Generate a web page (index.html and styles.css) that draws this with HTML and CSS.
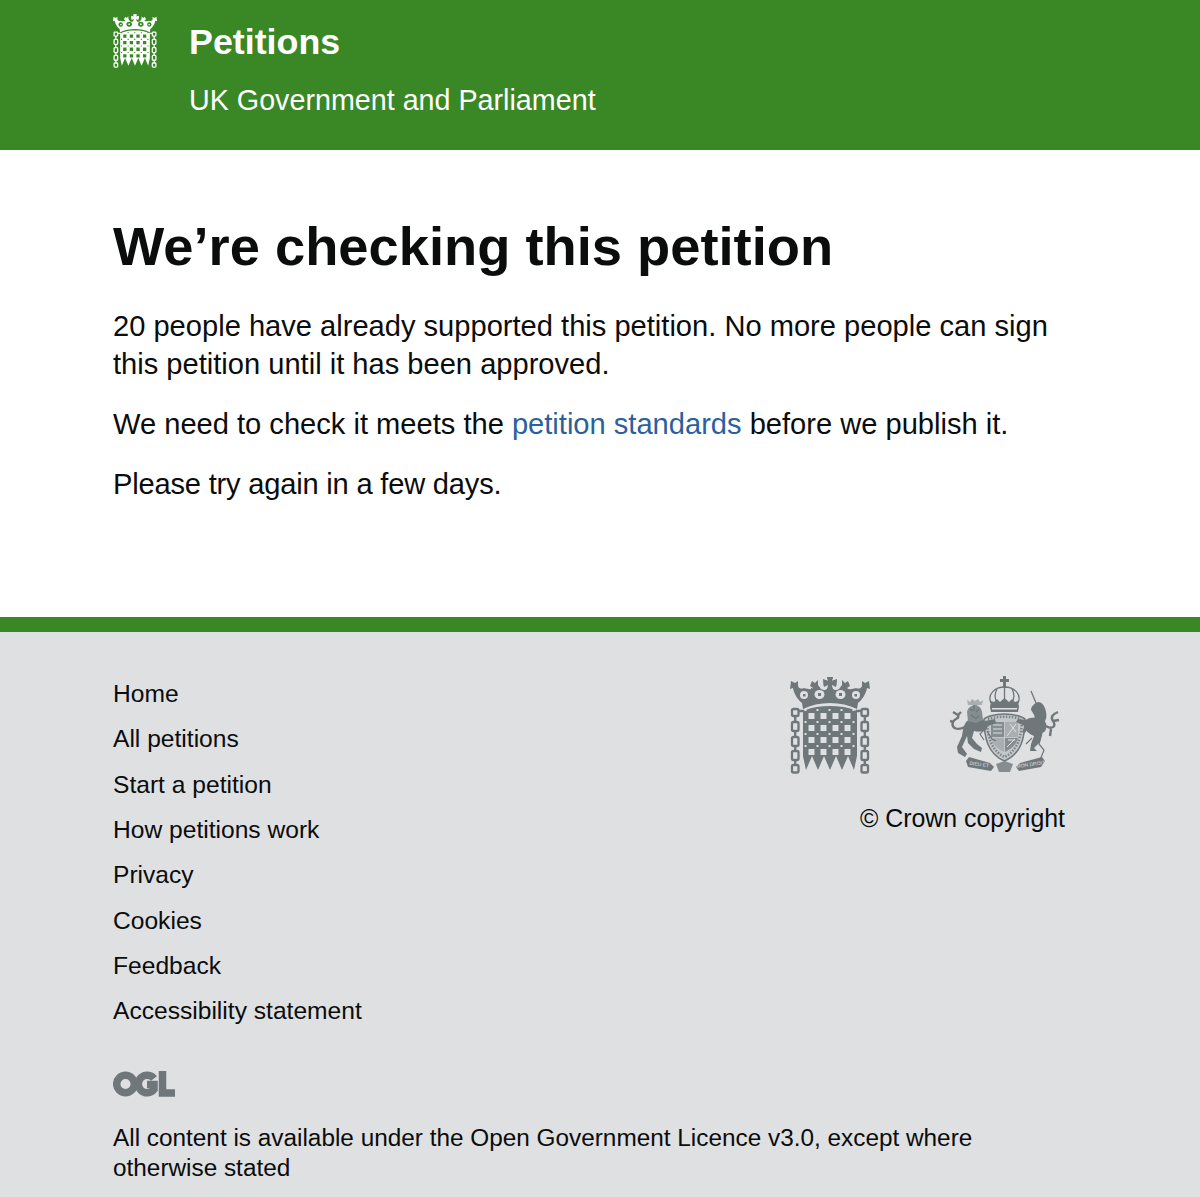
FILE: index.html
```html
<!DOCTYPE html>
<html lang="en">
<head>
<meta charset="utf-8">
<title>We’re checking this petition</title>
<link rel="stylesheet" href="styles.css">
</head>
<body>
<svg class="defs" width="0" height="0" aria-hidden="true">
  <symbol id="portcullis" viewBox="0 0 80 98">
    <path id="crown-half" d="M40 27C30 27 21 29 13 33L12 27C8 24 4 18 3 12L0 13 1 5 5 7 8 5 8 10C9 13 12 13 14 12 18 13 21 14 23 12L20 10 22 5 25 7 28 4 28 9 31 13C34 15 36 14 38 12L38 9 34 11 33 3 38 5 37 1H43L40 5z"/>
    <use href="#crown-half" transform="translate(80) scale(-1 1)"/>
    <path d="M38 5h4v10h-4z"/>
    <path d="M37 1h6l-1.500 4 5-1.500v6l-5-1.500 1.500 5h-6l1.500-5-5 1.500v-6l5 1.500z"/>
    <g class="crown-holes">
      <ellipse cx="29.500" cy="18.500" rx="5" ry="4.500"/>
      <ellipse cx="50.500" cy="18.500" rx="5" ry="4.500"/>
      <ellipse cx="14" cy="19" rx="4" ry="4"/>
      <ellipse cx="66" cy="19" rx="4" ry="4"/>
    </g>
    <path d="M28 17h3v3h-3zM49 17h3v3h-3zM13 18h2.500v2.500H13zM64.500 18H67v2.500h-2.500z"/>
    <path d="M13 35C22 31 31 30 40 30s18 1 27 5V80L64 94 58 80 52 94 46 80 40 94 34 80 28 94 22 80 16 94 13 80z"/>
    <g class="holes">
      <path class="hole-squares" d="M18.500 40h42M18.500 52h42M18.500 64h42M18.500 76h42"/>
      <path class="hole-dots" d="M14.500 34h50M14.500 46h50M14.500 58h50M14.500 70h50"/>
    </g>
    <g class="chain">
      <rect x="2" y="33" width="6.500" height="7" rx="1.500"/>
      <rect x="2" y="46" width="6.500" height="9" rx="1.500"/>
      <rect x="2" y="61" width="6.500" height="9" rx="1.500"/>
      <rect x="2" y="75" width="6.500" height="9" rx="1.500"/>
      <rect x="2" y="89" width="6.500" height="7.500" rx="1.500"/>
      <rect x="71.500" y="33" width="6.500" height="7" rx="1.500"/>
      <rect x="71.500" y="46" width="6.500" height="9" rx="1.500"/>
      <rect x="71.500" y="61" width="6.500" height="9" rx="1.500"/>
      <rect x="71.500" y="75" width="6.500" height="9" rx="1.500"/>
      <rect x="71.500" y="89" width="6.500" height="7.500" rx="1.500"/>
      <path d="M5.200 40v6M5.200 55v6M5.200 70v5M5.200 84v5M74.800 40v6M74.800 55v6M74.800 70v5M74.800 84v5M8 35h6M72 35h-6"/>
    </g>
  </symbol>
</svg>

<header class="site-header">
  <div class="wrap header-inner">
    <svg class="logo-header"><use href="#portcullis"/></svg>
    <div class="header-text">
      <div class="site-name">Petitions</div>
      <div class="site-sub">UK Government and Parliament</div>
    </div>
  </div>
</header>

<main class="wrap content">
  <h1>We’re checking this petition</h1>
  <p>20 people have already supported this petition. No more people can sign this petition until it has been approved.</p>
  <p>We need to check it meets the <a href="#">petition standards</a> before we publish it.</p>
  <p class="tight">Please try again in a few days.</p>
</main>

<footer class="site-footer">
  <div class="wrap">
    <div class="footer-top">
      <ul class="footer-nav">
        <li>Home</li>
        <li>All petitions</li>
        <li>Start a petition</li>
        <li>How petitions work</li>
        <li>Privacy</li>
        <li>Cookies</li>
        <li>Feedback</li>
        <li>Accessibility statement</li>
      </ul>
      <div class="footer-meta">
        <div class="crests">
          <svg class="logo-footer"><use href="#portcullis"/></svg>
          <svg class="arms" viewBox="0 0 110 100" aria-hidden="true">
            <!-- royal crown -->
            <path class="a-dark" d="M53 0h3v3h3v3h-3v6h-3V6h-3V3h3z"/>
            <path class="a-line" d="M41 27C37 18 45 11 54.500 11S72 18 68 27M54.500 11V27M47 13C44 18 45 23 47 27M62 13C65 18 64 23 62 27"/>
            <path class="a-dark" d="M41 25l3 1 3-3 3 3 4.500-4 4.500 4 3-3 3 3 3-1 1 6 -1 5H41l-1-5z"/>
            <path class="a-hole" d="M42 32h25v1.500H42z"/>
            <!-- shield and garter -->
            <path class="a-garter" d="M54.500 38C44 38 36 41 34 43 34 62 38 78 54.500 85 71 78 75 62 75 43 73 41 65 38 54.500 38z"/>
            <path class="a-garter-dots" d="M37 46C38 62 42 75 54.500 81 67 75 71 62 72 46M38 43C48 40 61 40 71 43"/>
            <path class="a-mid" d="M41 46h13v15H41z"/>
            <path class="a-soft" d="M55 46h13v15H55z"/>
            <path class="a-soft" d="M41 62h13v14C48 73 43 69 41 62z"/>
            <path class="a-mid" d="M55 62h13c-2 7-7 11-13 14z"/>
            <path class="a-line-hole" d="M43 49h9M43 53h9M43 57h9M57 60l9-12M60 48l6 8M57 71l8-8M58 64h7"/>
            <!-- lion -->
            <path class="a-dark" d="M17 45C22 42 30 42 35 45L45 43 46 47 38 50 36 54C32 56 28 56 24 55L22 62 27 68 32 72 31 76 24 73 18 67 17 60 12 71 17 78 15 81 8 77 7 71 12 60C13 53 14 48 17 45z"/>
            <path class="a-mid" d="M17 36C18 31 22 29 25 29S31 31 32 36L33 44 26 47 18 45z"/>
            <path class="a-soft" d="M18 29l-1-5 3 2 2-3 3 2 3-2 2 3 3-2-1 5z"/>
            <path class="a-line" d="M20 33l3 2M29 33l-3 3M21 39l4 3M29 40l-4 3M24 29v6"/>
            <path class="a-tail" d="M15 51C7 55 1 52 3 46 5 42 10 43 8 39L3 36M8 39l3-3M3 46L0 45"/>
            <path class="a-tail-thin" d="M37 55L42 63 46 65M35 53L30 58 34 64"/>
            <!-- unicorn -->
            <path class="a-dark" d="M76 44C82 40 92 41 96 47 97 52 96 56 92 57L90 66 84 72 87 75 80 75 81 68 84 60C80 58 76 56 74 50z"/>
            <path class="a-dark" d="M85 44C85 39 83 37 81 34 81 30 85 27 88 26 92 26 95 30 96 36 97 40 96 44 94 47z"/>
            <path class="a-dark" d="M78 44L68 43 66 46 75 50 72 56 75 57 79 51z"/>
            <path class="a-horn" d="M86 27L81 15"/>
            <path class="a-tail" d="M96 50C102 54 107 50 103 45 100 41 103 38 108 36M103 45L109 44M101 53L100 60"/>
            <path class="a-tail-thin" d="M92 57L89 68 94 74 90 84M82 62L76 68"/>
            <!-- motto ribbons and compartment -->
            <path class="a-dark" d="M16 85L19 81 40 87 44 91 41 95 18 91z"/>
            <path class="a-dark" d="M92 81L95 85 91 91 69 95 66 91 70 87z"/>
            <path class="a-mid" d="M46 88L54.500 85 63 88 60 96H49z"/>
            <text class="motto" x="29" y="90" text-anchor="middle" transform="rotate(8 29 90)">DIEU ET</text>
            <text class="motto" x="81" y="90" text-anchor="middle" transform="rotate(-8 81 90)">MON DROIT</text>
          </svg>
        </div>
        <div class="copyright">© Crown copyright</div>
      </div>
    </div>
    <svg class="ogl" viewBox="0 0 62 26" aria-hidden="true">
      <circle cx="12.500" cy="13" r="8.800"/>
      <path d="M41 7.500A8.800 8.800 0 1 0 41 18.500V13.500H34"/>
      <path d="M49.500 0V22H62"/>
    </svg>
    <p class="licence">All content is available under the Open Government Licence v3.0, except where otherwise stated</p>
  </div>
</footer>
</body>
</html>
```
FILE: styles.css
```css
* { box-sizing: border-box; }
html, body { margin: 0; padding: 0; }
body {
  font-family: "Liberation Sans", Arial, sans-serif;
  color: #0b0c0c;
  background: #fff;
}
.defs { position: absolute; }
.wrap { padding: 0 113px; }

.site-header {
  background: #3a8726;
  color: #fff;
  height: 150px;
  --ink: #fff;
  --hole: #3a8726;
}
.header-inner { display: flex; gap: 32px; padding-top: 14px; }
.logo-header { width: 44px; height: 54px; flex: none; }
.site-name { font-size: 35.800px; font-weight: 700; line-height: 42px; margin-top: 7px; }
.site-sub { font-size: 28.700px; line-height: 34px; margin-top: 20px; }

#portcullis path { fill: var(--ink); }
#portcullis .crown-holes ellipse { fill: var(--hole); }
#portcullis .holes path { fill: none; stroke: var(--hole); }
#portcullis .hole-squares { stroke-width: 6; stroke-dasharray: 6 6; }
#portcullis .hole-dots { stroke-width: 2; stroke-dasharray: 2 10; }
#portcullis .chain rect,
#portcullis .chain path { fill: none; stroke: var(--ink); stroke-width: 2.300; }

.content { height: 467px; padding-top: 65px; }
h1 { font-size: 54.300px; line-height: 64px; font-weight: 700; margin: 0 0 29px; }
.content p { font-size: 29.100px; line-height: 37.500px; margin: 0 0 22.500px; }
.content .tight { letter-spacing: -0.200px; }
.content a { color: #2b5f9e; text-decoration: none; }

.site-footer {
  background: #dee0e2;
  border-top: 15px solid #3a8726;
  height: 580px;
  padding-top: 39px;
  --ink: #6f777b;
  --hole: #dee0e2;
}
.footer-top { display: flex; justify-content: space-between; }
.footer-nav { list-style: none; margin: 0; padding: 0; font-size: 24.600px; }
.footer-nav li { line-height: 45.330px; }
.footer-meta { margin: 5px 22px 0 0; display: flex; flex-direction: column; align-items: flex-end; }
.crests { display: flex; gap: 80px; margin-right: 5px; }
.logo-footer { width: 80px; height: 98px; }
.arms { width: 110px; height: 100px; }
.a-dark { fill: #6f777b; }
.a-mid { fill: #868d90; }
.a-soft { fill: #a9aeb1; }
.a-hole { fill: #dee0e2; }
.a-line { fill: none; stroke: #6f777b; stroke-width: 1.300; }
.a-line-hole { fill: none; stroke: #dee0e2; stroke-width: 1; }
.a-garter { fill: #c3c7c9; stroke: #6f777b; stroke-width: 1.500; }
.a-garter-dots { fill: none; stroke: #7d8488; stroke-width: 2.500; stroke-dasharray: 1.500 1.500; }
.a-tail { fill: none; stroke: #6f777b; stroke-width: 2.400; }
.a-tail-thin { fill: none; stroke: #6f777b; stroke-width: 1.200; }
.a-horn { fill: none; stroke: #6f777b; stroke-width: 1.300; }
.motto { font-size: 5px; fill: #dee0e2; font-family: "Liberation Sans", Arial, sans-serif; }
.copyright { font-size: 24.900px; line-height: 30px; margin-top: 27px; }

.ogl { display: block; width: 62px; height: 26px; margin-top: 37px; fill: none; stroke: #6f777b; stroke-width: 7.500; }
.licence { font-size: 24.350px; line-height: 30px; margin: 26px 0 0; max-width: 900px; }
```
